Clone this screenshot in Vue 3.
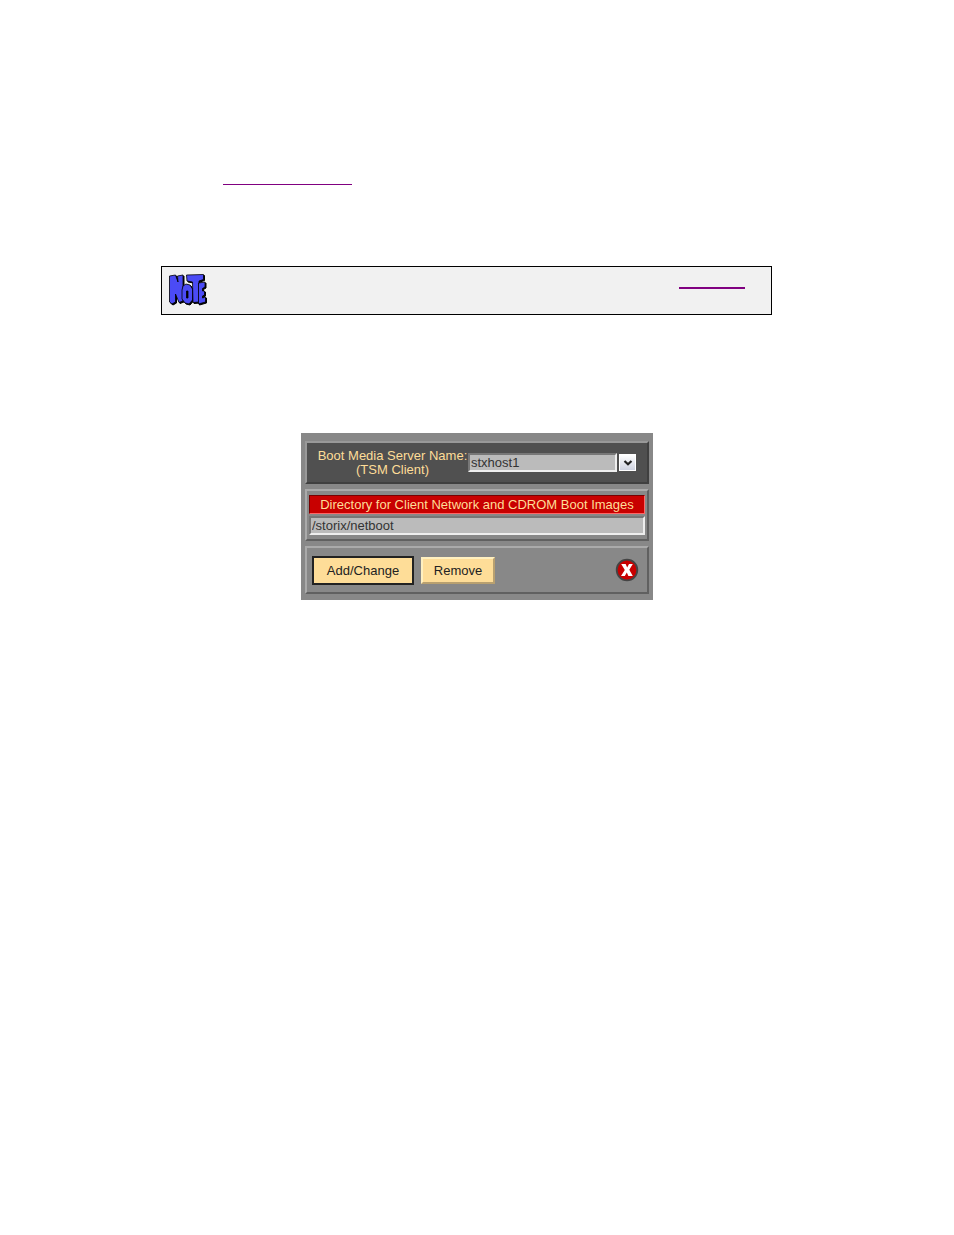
<template>
  <main class="page">
    <p class="reference">
      <a class="reference-link" href="#boot-media" aria-label="Boot media"></a>
    </p>

    <aside class="note">
      <svg class="note-icon" viewBox="0 0 38 32" role="img" aria-label="Note">
        <g class="note-shadow">
          <path v-for="shape of noteShapes" :key="shape" :d="shape" />
        </g>
        <g class="note-letters">
          <path v-for="shape of noteShapes" :key="shape" :d="shape" />
        </g>
      </svg>
      <a class="note-link" href="#user-guide" aria-label="User guide"></a>
    </aside>

    <form class="dialog" @submit.prevent>
      <div class="panel server">
        <label class="server-label" for="server">
          Boot Media Server Name:<br />(TSM Client)
        </label>
        <select id="server" ref="serverSelect" v-model="server" class="field server-field">
          <option v-for="host of hosts" :key="host">{{ host }}</option>
        </select>
        <button class="arrow" type="button" aria-label="Show servers" @click="openServers">
          <svg viewBox="0 0 10 8" width="10" height="8">
            <path d="M1.5 2 5 5.3 8.5 2" fill="none" stroke="#222" stroke-width="2.2" />
          </svg>
        </button>
      </div>

      <div class="panel directory">
        <label class="directory-label" for="directory">
          Directory for Client Network and CDROM Boot Images
        </label>
        <input id="directory" v-model="directory" class="field" type="text" />
      </div>

      <div class="panel actions">
        <button class="action default" type="submit">Add/Change</button>
        <button class="action" type="button" @click="directory = ''">Remove</button>
        <button class="close" type="button" aria-label="Close">
          <svg viewBox="0 0 24 24" width="24" height="24">
            <circle cx="12" cy="12" r="10.3" fill="#c80000" stroke="#444" stroke-width="1.8" />
            <path
              d="M6.2 6H10.6L12.2 9.4 14 6H17.8L14.3 11.7 17.8 18H13.4L11.8 14.4 9.8 18H6L9.8 12z"
              fill="#fff"
            />
          </svg>
        </button>
      </div>
    </form>
  </main>
</template>

<script setup>
import { ref } from "vue";

const hosts = ["stxhost1"];
const server = ref("stxhost1");
const directory = ref("/storix/netboot");
const serverSelect = ref(null);

const noteShapes = [
  "M.5 2 6.5 1 9 8 8.5 2 14 1 14 27 10 28.5 6.5 20 6.5 28 3 30 .5 28z",
  "M14 12 17 10 21 11 23.5 15 23.5 26 20 30 16 29 13 25 13 16zM17.5 17 17.5 24 19 24 19 17z",
  "M17.5 1 34.5 .5 34.5 5.5 30 7 30 28 24 28.5 23.5 8 18 7z",
  "M29.5 9 36 8 36 13 33.5 14.5 33.5 17 35.5 17 35.5 21 33.5 22 33.5 24 36.5 23 36.5 28 29.5 30z",
];

function openServers() {
  serverSelect.value.showPicker();
}
</script>

<style>
body {
  margin: 0;
  background: #fff;
}
</style>

<style scoped>
.page {
  padding-top: 168px;
  font-family: "Liberation Sans", Arial, sans-serif;
  font-size: 13px;
}

.reference {
  display: flex;
  margin: 0 182px 81px 223px;
}

.reference-link {
  width: 129px;
  height: 16px;
  border-bottom: 1px solid #800080;
}

.note {
  display: flex;
  justify-content: space-between;
  align-items: flex-start;
  box-sizing: border-box;
  height: 49px;
  margin: 0 182px 118px 161px;
  padding: 7px 26px 7px 7px;
  border: 1px solid #000;
  background: #f1f1f1;
}

.note-icon {
  width: 38px;
  height: 32px;
}

.note-shadow {
  fill: #000;
  stroke: #000;
  stroke-width: 1;
  stroke-linejoin: round;
  transform: translate(1px, 1px);
}

.note-letters {
  fill: #4b4bf5;
  fill-rule: evenodd;
  stroke: #000;
  stroke-width: 0.8;
  stroke-linejoin: round;
}

.note-link {
  width: 66px;
  height: 13px;
  border-bottom: 2px solid #800080;
}

.dialog {
  display: flex;
  flex-direction: column;
  gap: 5px;
  box-sizing: border-box;
  width: 352px;
  margin: 0 auto;
  padding: 8px 4px 6px;
  background: #888;
}

.panel {
  box-sizing: border-box;
  border: 2px solid;
  border-color: #aaa #606060 #606060 #aaa;
}

.server {
  display: flex;
  align-items: center;
  height: 43px;
  padding-left: 10px;
  border-color: #999 #404040 #404040 #999;
  background: #505050;
}

.server-label {
  width: 151px;
  color: #fedd98;
  line-height: 14px;
  text-align: center;
  white-space: nowrap;
}

.field {
  box-sizing: border-box;
  height: 19px;
  margin: 0;
  padding: 0 1px;
  border: 2px solid;
  border-color: #777 #eee #eee #777;
  border-radius: 0;
  outline: none;
  background: #bbb;
  color: #333;
  font: inherit;
  line-height: 15px;
  appearance: none;
}

.server-field {
  width: 149px;
}

.arrow {
  display: flex;
  align-items: center;
  justify-content: center;
  width: 17px;
  height: 17px;
  margin-left: 2px;
  padding: 0;
  border: 1px solid #fff;
  background: linear-gradient(#fff, #ced2e0);
}

.directory {
  display: flex;
  flex-direction: column;
  gap: 2px;
  height: 52px;
  padding: 4px 2px;
}

.directory-label {
  box-sizing: border-box;
  height: 19px;
  border: 1px solid;
  border-color: #700 #f66 #f66 #700;
  background: #c80000;
  color: #fedd98;
  line-height: 17px;
  text-align: center;
  white-space: nowrap;
}

.actions {
  display: flex;
  align-items: center;
  gap: 7px;
  height: 48px;
  padding: 0 8px 0 5px;
}

.action {
  box-sizing: border-box;
  width: 74px;
  height: 27px;
  padding: 0;
  border: 2px solid;
  border-color: #fff0c0 #b8a070 #b8a070 #fff0c0;
  background: #fedd98;
  color: #222;
  font: inherit;
}

.default {
  width: 102px;
  height: 29px;
  border-color: #222;
}

.close {
  display: flex;
  margin-left: auto;
  padding: 0;
  border: 0;
  background: none;
}
</style>
